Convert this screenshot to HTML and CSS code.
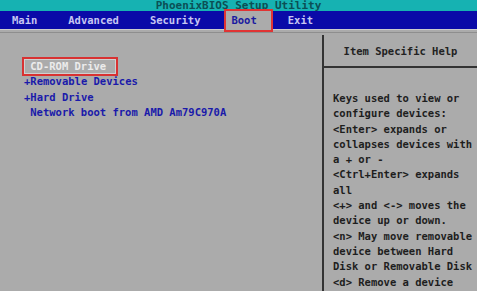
FILE: index.html
```html
<!DOCTYPE html>
<html lang="en">
<head>
  <meta charset="UTF-8">
  <title>PhoenixBIOS Setup Utility</title>
  <link rel="stylesheet" href="styles.css">
</head>
<body>
  <div class="titleBar">PhoenixBIOS Setup Utility</div>

  <div class="menuBar">
    <span class="menuItem">Main</span>
    <span class="menuItem">Advanced</span>
    <span class="menuItem">Security</span>
    <span class="menuItem active">Boot</span>
    <span class="menuItem">Exit</span>
  </div>
  <div class="menuRule"></div>

  <div class="screen">
    <div class="bootList">
      <div class="bootItem indent"><span class="selected">CD-ROM Drive</span></div>
      <div class="bootItem">+Removable Devices</div>
      <div class="bootItem">+Hard Drive</div>
      <div class="bootItem indent">Network boot from AMD Am79C970A</div>
    </div>

    <div class="helpPanel">
      <div class="helpTitle">Item Specific Help</div>
      <div class="helpText">
        <div>Keys used to view or</div>
        <div>configure devices:</div>
        <div>&lt;Enter&gt; expands or</div>
        <div>collapses devices with</div>
        <div>a + or -</div>
        <div>&lt;Ctrl+Enter&gt; expands</div>
        <div>all</div>
        <div>&lt;+&gt; and &lt;-&gt; moves the</div>
        <div>device up or down.</div>
        <div>&lt;n&gt; May move removable</div>
        <div>device between Hard</div>
        <div>Disk or Removable Disk</div>
        <div>&lt;d&gt; Remove a device</div>
      </div>
    </div>
  </div>
</body>
</html>
```

FILE: styles.css
```css
body {
  margin: 0;
  width: 477px;
  height: 291px;
  overflow: hidden;
  background-color: #ababab;
  font-family: "DejaVu Sans Mono", "Liberation Mono", monospace;
  font-weight: bold;
  font-size: 10.5px;
}

.titleBar {
  height: 11px;
  overflow: hidden;
  background-color: #16b2b2;
  color: #0b4f55;
  font-size: 11px;
  line-height: 11px;
  text-align: center;
}

.menuBar {
  display: flex;
  align-items: center;
  gap: 21px;
  height: 18px;
  padding-left: 7px;
  background-color: #0a0aa8;
}

.menuItem {
  padding: 0 5px;
  color: #c6c6f2;
  line-height: 18px;
}

.menuItem.active {
  height: 19px;
  padding-right: 14px;
  margin-right: -9px;
  margin-top: 1px;
  background-color: #ababab;
  color: #1a1aa0;
  box-shadow: 0 0 0 2px #e03434;
}

.menuRule {
  height: 2px;
  border-top: 1px solid #cdcdcd;
  border-bottom: 1px solid #8e8e8e;
  margin-bottom: 2px;
}

.screen {
  display: flex;
  height: 256px;
}

.bootList {
  width: 298px;
  padding: 24px 0 0 24px;
  border-right: 2px solid #333;
  color: #1a1aaa;
  line-height: 15.3px;
}

.bootItem.indent {
  padding-left: 6.3px;
}

.selected {
  display: inline-block;
  padding: 0 10px 0 6px;
  margin: -2px -12px -2px -8px;
  border: 2px solid #d83232;
  box-shadow: inset 0 0 0 1px #cfcfcf;
  color: #ececec;
}

.helpPanel {
  flex: 1;
  display: flex;
  flex-direction: column;
}

.helpTitle {
  height: 31px;
  border-bottom: 2px solid #333;
  color: #222;
  line-height: 33px;
  text-align: center;
}

.helpText {
  padding: 23px 0 0 9px;
  color: #1e1e1e;
  line-height: 15.3px;
  white-space: nowrap;
}
```
